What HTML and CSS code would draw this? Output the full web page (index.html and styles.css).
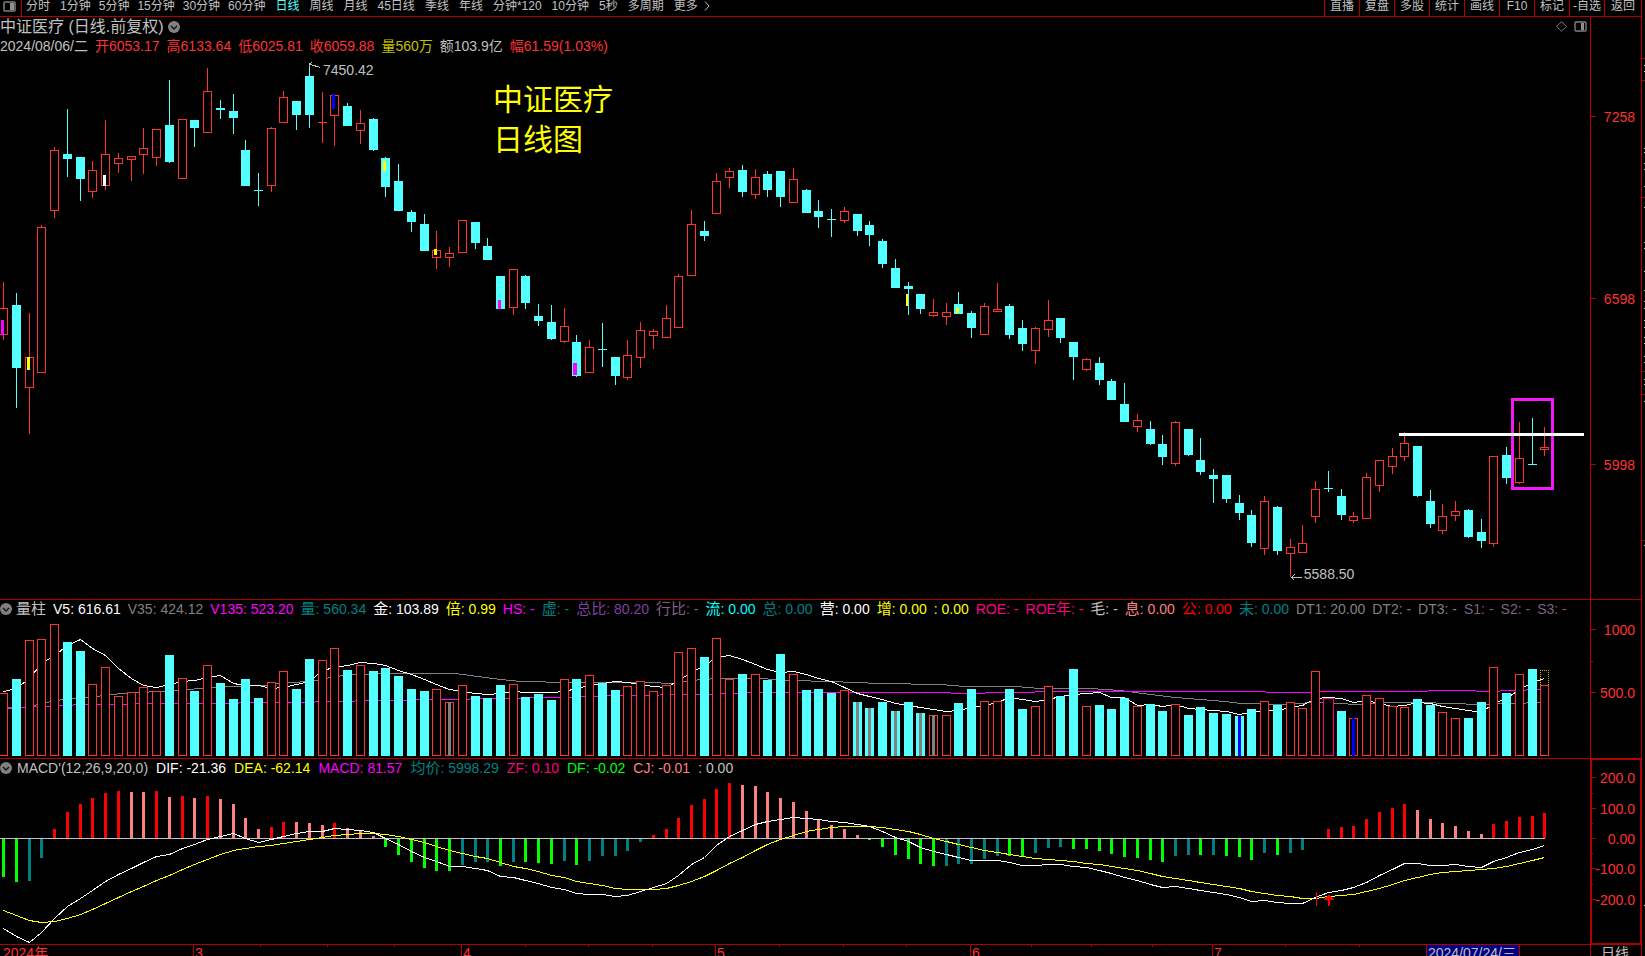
FILE: index.html
```html
<!DOCTYPE html>
<html lang="zh-CN">
<head>
<meta charset="utf-8">
<title>中证医疗 日线</title>
<link rel="stylesheet" href="styles.css">
</head>
<body>
<div class="terminal">
  <header class="toolbar">
    <button class="tool-side" aria-label="侧栏">
      <svg class="side-icon" viewBox="0 0 13 11"><rect x="1" y="1" width="11" height="9" rx="1" fill="none" stroke="#606060" stroke-width="2"/><rect x="7" y="2" width="4" height="7" fill="#909090"/></svg>
    </button>
    <nav class="periods">
      <button>分时</button>
      <div class="minutes"><button>1分钟</button><button>5分钟</button><button>15分钟</button><button>30分钟</button><button>60分钟</button></div>
      <button class="active">日线</button><button>周线</button><button>月线</button><button>45日线</button><button>季线</button><button>年线</button><button>分钟*120</button><button>10分钟</button><button>5秒</button><button>多周期</button><button class="more">更多<svg class="more-icon" viewBox="0 0 6 10"><path d="M1 .5 5 5 1 9.5" fill="none" stroke="#c0c0c0"/></svg></button>
    </nav>
    <nav class="actions">
      <button>直播</button><button>复盘</button><button>多股</button><button>统计</button><button>画线</button><button>F10</button><button>标记</button><button>-自选</button><button>返回</button>
    </nav>
  </header>

  <main class="board">
    <section class="panel price">
      <svg class="plot" id="price-plot" viewBox="0 17 1590 582" preserveAspectRatio="none"></svg>
      <div class="title-row">
        <h1>中证医疗 (日线.前复权)</h1>
        <button class="fold" aria-label="展开"><svg viewBox="0 0 12 12"><circle cx="6" cy="6" r="6" fill="#808080"/><path d="M3 5 6 8 9 5" fill="none" stroke="#111" stroke-width="1.4"/></svg></button>
        <div class="corner">
          <svg class="diamond" viewBox="0 0 11 11"><path d="M5.5.7 10.3 5.5 5.5 10.3.7 5.5Z" fill="none" stroke="#808080"/></svg>
          <svg class="side-icon" viewBox="0 0 13 11"><rect x="1" y="1" width="11" height="9" rx="1" fill="none" stroke="#808080" stroke-width="1.4"/><rect x="7" y="2" width="3" height="7" fill="#909090"/></svg>
        </div>
      </div>
      <div class="quote">
        <span>2024/08/06/二</span><span class="up">开6053.17</span><span class="up">高6133.64</span><span class="up">低6025.81</span><span class="up">收6059.88</span><span class="olive">量560万</span><span>额103.9亿</span><span class="up">幅61.59(1.03%)</span>
      </div>
      <p class="note">中证医疗<br>日线图</p>
      <span class="peak high">7450.42</span>
      <span class="peak low">5588.50</span>
    </section>
    <div class="axis" id="price-axis"></div>

    <section class="panel volume">
      <svg class="plot" id="volume-plot" viewBox="0 600 1590 158" preserveAspectRatio="none"></svg>
      <div class="legend">
        <button class="fold" aria-label="展开"><svg viewBox="0 0 12 12"><circle cx="6" cy="6" r="6" fill="#808080"/><path d="M3 5 6 8 9 5" fill="none" stroke="#111" stroke-width="1.4"/></svg></button>
        <span class="name"><i>量柱</i></span>
        <span class="white">V5: 616.61</span>
        <span class="gray">V35: 424.12</span>
        <span class="magenta">V135: 523.20</span>
        <span class="teal"><i>量</i>: 560.34</span>
        <span class="white"><i>金</i>: 103.89</span>
        <span class="yellow"><i>倍</i>: 0.99</span>
        <span class="magenta">HS: -</span>
        <span class="teal"><i>虚</i>: -</span>
        <span class="purple"><i>总比</i>: 80.20</span>
        <span class="mauve"><i>行比</i>: -</span>
        <span class="cyan"><i>流</i>: 0.00</span>
        <span class="teal"><i>总</i>: 0.00</span>
        <span class="white"><i>营</i>: 0.00</span>
        <span class="yellow"><i>增</i>: 0.00</span>
        <span class="yellow">: 0.00</span>
        <span class="rose">ROE: -</span>
        <span class="rose">ROE<i>年</i>: -</span>
        <span><i>毛</i>: -</span>
        <span class="salmon"><i>息</i>: 0.00</span>
        <span class="red"><i>公</i>: 0.00</span>
        <span class="teal"><i>未</i>: 0.00</span>
        <span class="gray">DT1: 20.00</span>
        <span class="gray">DT2: -</span>
        <span class="gray">DT3: -</span>
        <span class="mauve">S1: -</span>
        <span class="mauve">S2: -</span>
        <span class="mauve">S3: -</span>
      </div>
    </section>
    <div class="axis" id="volume-axis"></div>

    <section class="panel macd">
      <svg class="plot" id="macd-plot" viewBox="0 759 1590 185" preserveAspectRatio="none"></svg>
      <div class="legend wide">
        <button class="fold" aria-label="展开"><svg viewBox="0 0 12 12"><circle cx="6" cy="6" r="6" fill="#808080"/><path d="M3 5 6 8 9 5" fill="none" stroke="#111" stroke-width="1.4"/></svg></button>
        <span class="name">MACD'(12,26,9,20,0)</span>
        <span class="white">DIF: -21.36</span>
        <span class="yellow">DEA: -62.14</span>
        <span class="magenta">MACD: 81.57</span>
        <span class="teal"><i>均价</i>: 5998.29</span>
        <span class="rose">ZF: 0.10</span>
        <span class="green">DF: -0.02</span>
        <span class="salmon">CJ: -0.01</span>
        <span>: 0.00</span>
      </div>
    </section>
    <div class="axis selected" id="macd-axis"></div>

    <footer class="timeline" id="timeline"></footer>
    <div class="axis unit">日线</div>
  </main>
  <aside class="edge"><svg class="plot" id="edge-plot" viewBox="1642 0 3 956" preserveAspectRatio="none"></svg></aside>
</div>
<script src="chart.js"></script>
</body>
</html>
```
FILE: styles.css
```css
* { box-sizing: border-box; }

body {
  margin: 0;
  background: #000;
  color: #c0c0c0;
  font: 14px/20px "Liberation Sans", "Noto Sans CJK SC", sans-serif;
}

button {
  margin: 0;
  padding: 0;
  border: 0;
  background: none;
  color: inherit;
  font: inherit;
  white-space: nowrap;
  cursor: pointer;
}

svg { display: block; }

.terminal {
  display: grid;
  grid-template-columns: minmax(0, 1fr) 4px;
  grid-template-rows: 17px minmax(0, 1fr);
  height: 100vh;
  min-height: 480px;
  overflow: hidden;
}

.toolbar {
  display: flex;
  border-bottom: 1px solid #b00000;
  font-size: 12px;
  line-height: 12px;
}

.tool-side {
  width: 22px;
  padding: 0 0 4px 3px;
  border-right: 1px solid #b00000;
}

.side-icon { width: 13px; height: 11px; }

.periods {
  display: flex;
  flex: 1;
  align-items: flex-start;
  gap: 10px;
  padding-left: 4px;
  overflow: hidden;
}

.periods .active { color: #54ffff; }

.minutes { display: flex; gap: 8px; }

.more { display: flex; gap: 6px; align-items: center; }
.more-icon { width: 6px; height: 10px; }

.actions { display: flex; }

.actions button {
  width: 35px;
  padding-bottom: 4px;
  border-left: 1px solid #b00000;
}

.actions button:last-child { width: 37px; }

.edge {
  grid-column: 2;
  grid-row: 1 / 3;
  position: relative;
  border-left: 1px solid #b00000;
}

.board {
  display: grid;
  grid-template-columns: minmax(0, 1fr) 51px;
  grid-template-rows: 583fr 159fr 186fr 11px;
  min-height: 0;
}

.panel {
  position: relative;
  min-width: 0;
  overflow: hidden;
  border-bottom: 1px solid #b00000;
}

.plot {
  position: absolute;
  inset: 0;
  width: 100%;
  height: 100%;
  shape-rendering: crispEdges;
}

.title-row {
  position: relative;
  display: flex;
  align-items: center;
  gap: 4px;
  height: 19px;
}

h1 { margin: 0; font-size: 16px; font-weight: 400; line-height: 19px; }

.fold { width: 12px; height: 12px; }

.corner {
  display: flex;
  align-items: center;
  gap: 7px;
  margin-left: auto;
  padding-right: 3px;
}

.diamond { width: 11px; height: 11px; }

.quote {
  position: relative;
  display: flex;
  gap: 7px;
  white-space: nowrap;
}

.note {
  position: absolute;
  left: 31%;
  top: 63px;
  margin: 0;
  color: #ff0;
  font-size: 30px;
  line-height: 40px;
}

.peak { position: absolute; }
.high { left: 323px; top: 43px; }
.low { left: 82%; top: 94%; }

.legend {
  position: relative;
  display: flex;
  align-items: center;
  gap: 7px;
  height: 18px;
  line-height: 18px;
  white-space: nowrap;
}

.legend.wide { gap: 8px; }

.legend .fold { flex: none; margin-right: -3px; }
.legend i { font-style: normal; font-size: 15px; }

.up { color: #ff3232; }
.olive { color: #c0c000; }
.white { color: #fff; }
.gray { color: #808080; }
.magenta { color: #f0f; }
.teal { color: #008080; }
.yellow { color: #ff0; }
.purple { color: #8040a0; }
.mauve { color: #806080; }
.cyan { color: #0ff; }
.rose { color: #ff0080; }
.salmon { color: #ff8080; }
.red { color: #f00; }
.green { color: #0f0; }

.axis {
  position: relative;
  border-left: 1px solid #b00000;
  border-bottom: 1px solid #b00000;
  color: #ff3232;
}

.axis.selected { box-shadow: inset 0 0 0 1px #b00000; }

.axis .mark {
  position: absolute;
  right: 6px;
  line-height: 20px;
  transform: translateY(-50%);
}

.axis .tick {
  position: absolute;
  left: 0;
  width: 5px;
  height: 1px;
  background: #b00000;
}

.axis .tick.minor { width: 2px; }

.axis.unit {
  border-bottom: 0;
  padding-left: 10px;
  color: #c0c0c0;
  line-height: 17px;
  overflow: hidden;
}

.timeline {
  position: relative;
  overflow: hidden;
  color: #ff3232;
  line-height: 17px;
}

.timeline .month {
  position: absolute;
  top: 0;
  padding-left: 1px;
  border-left: 1px solid #b00000;
}

.timeline .month:first-child { border-left-color: transparent; }

.timeline .step {
  position: absolute;
  top: 0;
  width: 1px;
  height: 2px;
  background: #b00000;
}

.timeline .cursor {
  position: absolute;
  top: 0;
  width: 94px;
  padding-left: 1px;
  border: solid #b00000;
  border-width: 0 1px;
  background: #000080;
  color: #c0c0c0;
  white-space: nowrap;
}
```
FILE: chart.js
```js
const RED = '#ff3232', CYAN = '#54ffff', FRAME = '#b00000';
const WIDTH = 1590;
const centre = i => Math.floor(3.78 + i * 12.736);

// Each candle: direction, high, body top, body bottom, low.
const candles = `r282,308,335,340 c293,305,368,408 r313,357,388,434 r225,227,373,373 r147,150,211,218
c109,154,159,177 c157,157,179,201 r161,170,192,198 r120,154,186,190 r153,158,164,173 r156,156,160,181
r128,148,155,174 r129,129,158,166 c80,125,162,163 r119,119,179,179 c120,120,128,147 r68,91,133,133
c100,108,110,119 c94,111,118,134 c140,150,186,186 c173,190,191,206 r127,128,186,192 r91,97,123,123
c101,101,115,130 c63,76,115,128 r92,122,123,143 r94,95,116,146 c103,106,126,126 r110,123,131,144
c118,119,150,151 c157,158,187,197 c164,181,211,211 c210,212,222,232 c214,224,251,251 r231,250,258,269
r247,253,258,267 r220,220,253,253 c222,222,243,249 c238,246,260,260 c276,276,309,309 r269,269,308,315
c275,276,303,309 c304,316,321,326 c305,322,339,340 r308,326,342,343 c335,342,376,377 r340,347,373,373
c323,349,350,367 c357,357,376,385 r340,355,378,380 r322,330,358,368 r329,331,336,349 r305,318,338,338
r274,276,328,328 r210,224,276,276 c221,231,236,241 r173,181,214,214 r168,171,178,188 c165,170,192,197
r169,177,195,199 c171,174,190,197 c171,171,197,207 r168,179,203,203 c189,190,213,213 c200,211,217,228
c209,219,220,237 r207,211,221,223 c214,214,231,236 c221,225,235,246 c239,241,264,268 c259,268,288,288
c282,286,289,315 c294,294,309,314 r299,312,316,317 r303,312,317,325 c292,304,314,314 c311,313,328,338
r303,306,335,335 r283,309,312,312 c304,306,335,339 c320,328,344,351 r327,328,351,364 r300,320,330,337
c318,318,338,343 c342,342,357,380 r358,359,370,371 c357,363,380,385 c379,381,400,400 c383,404,422,422
r414,420,427,432 c421,429,444,445 c435,444,457,465 r421,422,464,466 c429,429,455,456 c438,460,472,475
c469,475,479,503 c475,475,499,503 c495,503,513,520 c510,515,543,547 r496,501,549,555 c506,507,551,555
r539,547,554,577 r525,543,553,553 r481,489,517,523 c471,488,489,492 c489,496,515,520 r512,516,521,523
r473,477,519,519 r460,460,486,492 r448,456,467,474 r432,443,457,461 c446,446,496,497 c490,501,524,528
r504,516,531,534 r501,511,516,521 c509,510,537,538 c519,532,541,548 r456,456,544,547 c447,455,478,484
r422,458,483,484 c418,464,465,465 r427,447,450,456`.split(/\s+/).map(s => [s[0], ...s.slice(1).split(',').map(Number)]);

const volumeTops = [693,679,640,639,624,642,651,684,667,696,692,687,691,655,678,691,665,683,699,679,698,682,671,689,659,660,648,670,665,671,668,676,689,
691,689,702,685,696,698,685,684,697,694,700,679,679,675,683,690,686,681,691,685,652,648,657,638,679,674,674,680,654,674,690,689,693,690,702,708,702,711,702,713,715,715,
703,689,701,701,689,709,706,686,696,669,706,705,709,698,706,704,711,704,715,707,713,714,716,709,701,705,702,708,671,698,711,718,695,698,706,707,699,705,712,718,718,702,667,693,674,669,685];
const volumeCores = { 35: '#808080', 67: '#808080', 68: '#808080', 70: '#808080', 72: '#808080', 73: '#808080', 97: '#00f', 106: '#00f' };

const v5 = [691,688,678,663,655,645,639,648,655,668,678,685,687,684,681,680,677,675,683,685,685,688,687,684,681,670,667,665,662,663,665,670,674,679,684,689,691,693,694,693,691,692,692,692,691,688,685,683,681,682,684,686,687,680,672,665,657,655,659,664,669,672,671,674,678,681,687,693,696,699,703,705,707,709,711,710,707,705,702,697,699,701,699,696,694,693,692,697,697,705,704,706,704,708,709,710,711,714,712,710,710,707,705,698,697,698,702,700,703,706,705,702,703,706,708,710,712,703,698,689,682,678];
const v35 = '7,708 22,707 33,705 55,700 75,698 105,695 120,693 140,692 175,690 200,688 225,686 262,685 290,682 310,681 335,676 355,674 390,673 455,673 470,675 500,679 520,681 570,682 650,682 670,683 700,679 720,678 760,678 790,680 830,681 880,683 940,684 965,686 1015,686 1040,688 1090,688 1120,690 1150,694 1175,697 1200,699 1225,701 1240,703 1290,704 1310,702 1360,704 1390,702 1420,702 1480,704 1510,703 1541,702';
const v135 = '8,707 50,706 80,704 180,703 300,702 330,701 380,700 440,699 500,698 560,697 620,695 700,694 760,692 930,692 970,693 1000,692 1070,691 1230,691 1300,692 1330,691 1425,691 1430,690 1460,690 1490,691 1510,690 1541,689';

const macdBars = `G877 G882 T881 T858 R829 R812 R804 R798 R793 R791 P792 P792 R791 P797 R796 P798 R796 P799 P804 P818 P829 R827 R822 P822 P823 P825 R823 P828 P830 P836 G847 G855 G862
G868 G871 G871 T865 T862 T862 G866 T862 G862 G863 G864 T861 G865 T861 T856 T856 T851 T842 R835 R829 R818 R805 R799 R789 R783 P785 P786 P792 P798 P802 P811 P819 P825 P829 P835
G840 G847 G855 G859 G864 G866 T866 T864 T864 T859 T856 G856 G856 T853 T848 T847 G849 G849 G851 G854 G857 G858 G860 G862 T856 T855 G855 T855 G856 G857 G860 T853 G855 T853 T850 Y839
R829 R827 R826 R819 R812 R808 R804 P810 P819 P823 P826 P831 P834 R824 R821 R817 R816 R813`.split(/\s+/);
const barColours = { G: '#0f0', T: '#008080', R: '#f00', P: '#ff8080', Y: '#c0c000' };

const dif = [928,936,942,932,918,906,898,890,881,874,868,862,856,854,848,844,839,836,833,838,842,839,836,833,831,831,828,829,830,832,838,844,851,857,861,866,866,868,870,876,877,880,883,887,889,893,894,894,896,895,891,887,883,875,864,857,845,836,830,824,821,819,817,818,819,821,822,824,826,831,837,841,847,851,854,857,860,860,860,862,865,865,864,864,866,867,870,873,877,880,884,887,886,888,890,892,894,897,901,900,902,903,903,897,892,890,887,882,875,869,863,863,865,865,864,866,867,861,857,852,849,845];
const dea = [910,915,920,922,921,918,914,909,903,897,891,886,880,875,869,864,859,854,850,848,846,845,843,841,839,837,835,834,833,833,834,836,839,842,846,850,853,856,858,862,866,868,871,875,877,881,883,885,888,889,889,889,888,885,881,876,870,863,857,850,844,839,835,831,829,827,826,826,826,827,829,831,834,838,841,844,847,850,852,854,856,858,859,860,861,863,864,866,868,870,873,876,878,880,882,884,886,888,891,893,895,896,898,898,896,895,894,891,888,884,880,877,874,872,871,870,869,868,866,863,860,857];

const rect = (x, y, w, h, fill) => `<rect x="${x}" y="${y}" width="${w}" height="${h}" fill="${fill}"/>`;
const frame = (x, y, w, h, colour) => `<rect x="${x + .5}" y="${y + .5}" width="${w - 1}" height="${h - 1}" fill="#000" stroke="${colour}"/>`;
const line = (points, colour) => `<polyline points="${points}" transform="translate(.5 .5)" fill="none" stroke="${colour}"/>`;
const series = values => values.map((y, i) => `${centre(i)},${y}`).join(' ');

function drawPrice() {
  let out = '';
  candles.forEach(([kind, high, top, bottom, low], i) => {
    const x = centre(i), colour = kind === 'r' ? RED : CYAN;
    out += rect(x, high, 1, low - high, colour);
    out += kind === 'r' && bottom - top > 1
      ? frame(x - 4, top, 9, bottom - top, colour)
      : rect(x - 4, top, 9, bottom - top, colour);
  });
  const signals = [[1,320,3,15,'#f0f'],[27,357,3,13,'#ff0'],[103,175,3,11,'#fff'],[332,94,3,15,'#00f'],[383,161,3,10,'#ff0'],[434,249,3,6,'#ff0'],
    [498,300,3,9,'#f0f'],[573,363,4,12,'#f0f'],[906,294,2,12,'#ff0'],[956,308,3,5,'#ff0']];
  signals.forEach(s => out += rect(...s));
  out += line('309,66 309,63 312,62', '#c0c0c0') + line('310,64 320,67', '#c0c0c0');
  out += line('1291,577 1301,577', '#c0c0c0') + line('1294,574 1291,577 1294,580', '#c0c0c0');
  out += '<rect x="1512.5" y="399.5" width="40" height="89" fill="none" stroke="#f418f4" stroke-width="3"/>';
  out += rect(1399, 433, 185, 3, '#fff');
  document.getElementById('price-plot').innerHTML = out;
}

function drawVolume() {
  let out = line(v35, '#808080') + line(v135, '#f0f') + line(series(v5), '#fff');
  volumeTops.forEach((top, i) => {
    const x = centre(i), height = 756 - top;
    if (i === 104) out += frame(x - 5, top, 11, height, '#ff0080');
    else out += candles[i][0] === 'r' ? frame(x - 4, top, 9, height, RED) : rect(x - 4, top, 9, height, CYAN);
    if (volumeCores[i]) out += rect(x - 1, top, 3, height, volumeCores[i]);
  });
  out += '<path d="M1540.5 685V670.5H1548.5V685" fill="none" stroke="#c0c000" stroke-dasharray="1 1"/>';
  document.getElementById('volume-plot').innerHTML = out;
}

function drawMacd() {
  let out = '';
  macdBars.forEach((bar, i) => {
    const y = Number(bar.slice(1));
    out += rect(centre(i) - 1, Math.min(y, 838), 3, Math.abs(y - 838), barColours[bar[0]]);
  });
  out += rect(0, 838, 1545, 1, '#c0c0c0') + line(series(dea), '#ff0') + line(series(dif), '#fff');
  out += rect(1316, 892, 1, 14, '#f00') + '<path d="M1329 894 1334 900H1330V906H1328V900H1324Z" fill="#f00"/>';
  document.getElementById('macd-plot').innerHTML = out;
}

function drawAxis(id, top, height, marks, minor) {
  const at = y => ((y - top) / height * 100) + '%';
  document.getElementById(id).innerHTML =
    marks.map(([y, text]) => `<i class="tick" style="top:${at(y)}"></i><span class="mark" style="top:${at(y + 1)}">${text}</span>`).join('') +
    minor.map(y => `<i class="tick minor" style="top:${at(y)}"></i>`).join('');
}

function drawTimeline() {
  const at = x => (x / WIDTH * 100) + '%';
  const months = [[1, '2024年'], [193, '3'], [461, '4'], [715, '5'], [970, '6'], [1212, '7']];
  const steps = [260, 327, 394, 525, 588, 652, 779, 843, 906, 1031, 1091, 1152, 1285, 1359];
  document.getElementById('timeline').innerHTML =
    months.map(([x, text]) => `<span class="month" style="left:${at(x)}">${text}</span>`).join('') +
    steps.map(x => `<i class="step" style="left:${at(x)}"></i>`).join('') +
    `<span class="cursor" style="left:${at(1426)}">2024/07/24/三</span>`;
}

function drawEdge() {
  let out = [58, 80, 197, 371, 394, 540].map(y => rect(1642, y, 3, 1, FRAME)).join('');
  out += [65, 71, 148, 152, 163, 169, 186, 207, 242, 248, 271, 290, 301, 308, 320, 327, 337, 343, 356, 362, 379, 384, 401, 545, 905]
    .map(y => rect(1644, y, 1, 1, '#c0c0c0')).join('');
  document.getElementById('edge-plot').innerHTML = out;
}

drawPrice();
drawVolume();
drawMacd();
drawAxis('price-axis', 17, 582, [[116, '7258'], [298, '6598'], [464, '5998']], []);
drawAxis('volume-axis', 600, 158, [[629, '1000'], [692, '500.0']], [661]);
drawAxis('macd-axis', 759, 185, [[777, '200.0'], [808, '100.0'], [838, '0.00'], [868, '-100.0'], [899, '-200.0']], [793, 823, 853, 884]);
drawTimeline();
drawEdge();
```
